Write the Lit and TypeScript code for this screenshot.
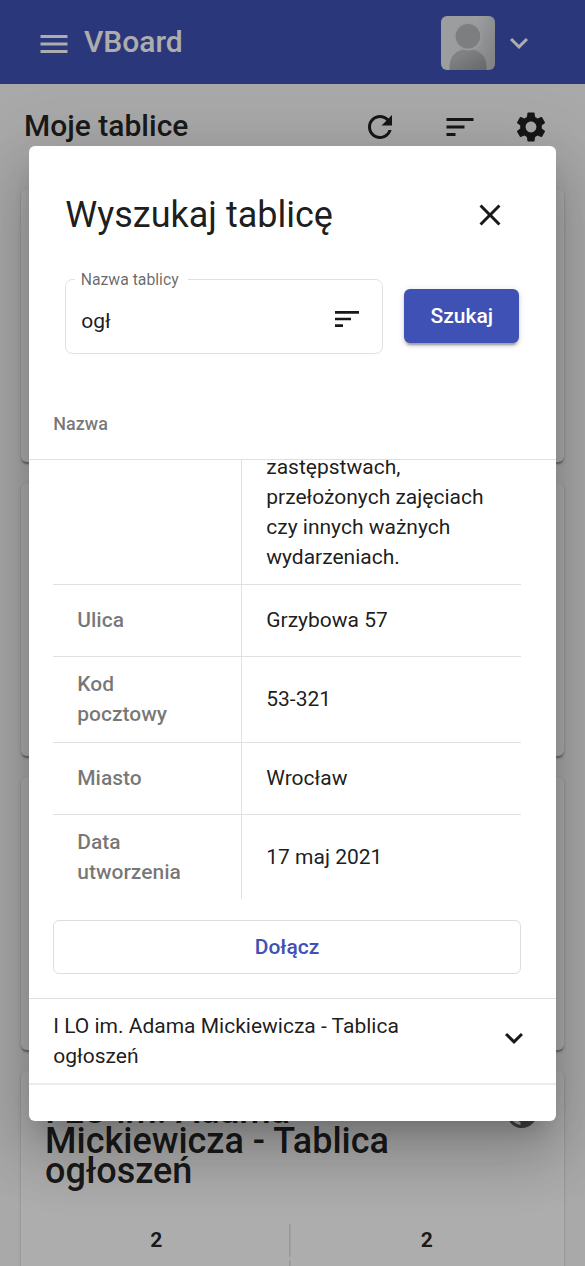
import { LitElement, html, css, svg } from "lit";
import { customElement, property } from "lit/decorators.js";

const ICONS: Record<string, string> = {
  menu: "M3 18h18v-2H3v2zm0-5h18v-2H3v2zm0-7v2h18V6H3z",
  refresh:
    "M17.65 6.35C16.2 4.9 14.21 4 12 4c-4.42 0-7.99 3.58-7.99 8s3.57 8 7.99 8c3.73 0 6.84-2.55 7.73-6h-2.08c-.82 2.33-3.04 4-5.65 4-3.31 0-6-2.69-6-6s2.69-6 6-6c1.66 0 3.14.69 4.22 1.78L13 11h7V4l-2.35 2.35z",
  sort: "M3 18h6v-2H3v2zM3 6v2h18V6H3zm0 7h12v-2H3v2z",
  settings:
    "M19.14 12.94c.04-.3.06-.61.06-.94 0-.32-.02-.64-.07-.94l2.03-1.58c.18-.14.23-.41.12-.61l-1.92-3.32c-.12-.22-.37-.29-.59-.22l-2.39.96c-.5-.38-1.03-.7-1.62-.94l-.36-2.54c-.04-.24-.24-.41-.48-.41h-3.84c-.24 0-.43.17-.47.41l-.36 2.54c-.59.24-1.13.57-1.62.94l-2.39-.96c-.22-.08-.47 0-.59.22L2.74 8.87c-.12.21-.08.47.12.61l2.03 1.58c-.05.3-.09.63-.09.94s.02.64.07.94l-2.03 1.58c-.18.14-.23.41-.12.61l1.92 3.32c.12.22.37.29.59.22l2.39-.96c.5.38 1.03.7 1.62.94l.36 2.54c.05.24.24.41.48.41h3.84c.24 0 .44-.17.47-.41l.36-2.54c.59-.24 1.13-.56 1.62-.94l2.39.96c.22.08.47 0 .59-.22l1.92-3.32c.12-.22.07-.47-.12-.61l-2.01-1.58zM12 15.6c-1.98 0-3.6-1.62-3.6-3.6s1.62-3.6 3.6-3.6 3.6 1.62 3.6 3.6-1.62 3.6-3.6 3.6z",
  close:
    "M19 6.41 17.59 5 12 10.59 6.41 5 5 6.41 10.59 12 5 17.59 6.41 19 12 13.41 17.59 19 19 17.59 13.41 12z",
  expand: "M16.59 8.59 12 13.17 7.41 8.59 6 10l6 6 6-6z",
  public:
    "M12 2C6.48 2 2 6.48 2 12s4.48 10 10 10 10-4.48 10-10S17.52 2 12 2zm-1 17.93c-3.95-.49-7-3.85-7-7.93 0-.62.08-1.21.21-1.79L9 15v1c0 1.1.9 2 2 2v1.93zm6.9-2.54c-.26-.81-1-1.39-1.9-1.39h-1v-3c0-.55-.45-1-1-1H8v-2h2c.55 0 1-.45 1-1V7h2c1.1 0 2-.9 2-2v-.41c2.93 1.19 5 4.06 5 7.41 0 2.08-.8 3.97-2.1 5.39z",
};

@customElement("mat-glyph")
class MatGlyph extends LitElement {
  @property() name = "menu";
  static styles = css`
    :host { display: block; width: 36px; height: 36px; flex: none; }
    svg { display: block; width: 100%; height: 100%; }
  `;
  render() {
    return html`<svg viewBox="0 0 24 24" fill="currentColor">${svg`<path d=${ICONS[this.name]}></path>`}</svg>`;
  }
}

@customElement("board-page")
class BoardPage extends LitElement {
  static styles = css`
    :host { display: block; height: 1266px; overflow: hidden; background: #fafafa; color: rgba(0,0,0,.87); }
    .bar { height: 84px; background: #3f51b5; color: #fff; display: flex; align-items: center; padding: 2px 48px 0 36px; box-sizing: border-box; }
    .menu { margin-top: 1px; }
    .brand { font-size: 30px; font-weight: 500; line-height: 36px; margin: -2px 0 0 12px; }
    .avatar { width: 54px; height: 54px; border-radius: 6px; overflow: hidden; margin: 0 6px 0 auto; }
    .avatar svg { display: block; }
    .head { height: 86px; display: flex; align-items: center; padding: 0 36px 0 24px; }
    .head h1 { font-size: 30px; line-height: 36px; font-weight: 500; margin: -2px auto 0 0; }
    .tools { display: flex; gap: 45px; }
    .tools :nth-child(2) { margin: 0 .5px 0 -.5px; }
    .tools :last-child { margin-left: -10.5px; }
    .list { display: flex; flex-direction: column; gap: 21px; padding: 19px 21px 0; }
    .card { height: 273px; flex: none; background: #fff; border-radius: 6px; box-sizing: border-box;
      box-shadow: 0 3px 1.5px -1.5px rgba(0,0,0,.2), 0 1.5px 1.5px rgba(0,0,0,.14), 0 1.5px 4.5px rgba(0,0,0,.12); }
    .title { display: flex; justify-content: space-between; padding: 24px 24px 0; }
    .title h2 { width: 360px; margin: 1px 0 0; font-size: 36px; line-height: 30px; font-weight: 500; }
    .globe { color: rgba(0,0,0,.6); }
    .counts { display: flex; font-size: 21px; font-weight: 700; line-height: 33px; margin-top: 38px; text-align: center; }
    .counts div { flex: 1; }
    .counts div:first-child { background: linear-gradient(#e0e0e0, #e0e0e0) right 1.5px top / 1.5px 100% no-repeat; }
    .counts div:last-child { padding-right: 2px; }
    .rule { height: 36px; margin-top: 3px; width: 270.5px; background: linear-gradient(#e0e0e0, #e0e0e0) right 1.5px top / 1.5px 100% no-repeat; }
  `;
  render() {
    return html`
      <header class="bar">
        <mat-glyph class="menu" name="menu"></mat-glyph>
        <div class="brand">VBoard</div>
        <div class="avatar">
          <svg width="54" height="54" viewBox="0 0 54 54">
            <defs>
              <linearGradient id="bg" x1="0" y1="0.3" x2="1" y2="0.7"><stop offset="0.5" stop-color="#e5e8ea"/><stop offset="1" stop-color="#c0c3c5"/></linearGradient>
              <linearGradient id="fg" x1="0" y1="0" x2="1" y2="1"><stop offset="0.3" stop-color="#bcbec0"/><stop offset="1" stop-color="#96989a"/></linearGradient>
            </defs>
            <rect width="54" height="54" fill="url(#bg)"/>
            <path d="M8.500 54v-4C8.500 39 17 33 27 33s18.500 6 18.500 17v4z" fill="url(#fg)"/>
            <circle cx="27" cy="20.200" r="14.200" fill="#e0e3e5"/>
            <circle cx="27" cy="20.200" r="12.300" fill="#b8babd"/>
          </svg>
        </div>
        <mat-glyph name="expand"></mat-glyph>
      </header>
      <div class="head">
        <h1>Moje tablice</h1>
        <div class="tools">
          <mat-glyph name="refresh"></mat-glyph>
          <mat-glyph name="sort"></mat-glyph>
          <mat-glyph name="settings"></mat-glyph>
        </div>
      </div>
      <div class="list">
        <div class="card"></div>
        <div class="card"></div>
        <div class="card"></div>
        <div class="card">
          <div class="title"><h2>I LO im. Adama Mickiewicza - Tablica ogłoszeń</h2><mat-glyph class="globe" name="public"></mat-glyph></div>
          <div class="counts"><div>2</div><div>2</div></div>
          <div class="rule"></div>
        </div>
      </div>
    `;
  }
}

@customElement("search-dialog")
class SearchDialog extends LitElement {
  static styles = css`
    :host { display: flex; flex-direction: column; width: 526.5px; height: 975px; box-sizing: border-box; background: #fff; border-radius: 6px; overflow: hidden; color: rgba(0,0,0,.9);
      box-shadow: 0 16.5px 22.5px -10.5px rgba(0,0,0,.2), 0 36px 57px 4.5px rgba(0,0,0,.14), 0 13.5px 69px 12px rgba(0,0,0,.12); }
    .top { display: flex; justify-content: space-between; align-items: center; padding: 48px 48px 0 36px; height: 42px; }
    .top h2 { margin: 0; font-size: 36px; line-height: 42px; font-weight: 400; }
    .form { display: flex; padding: 33.5px 36px 0; height: 85.5px; }
    fieldset { width: 318px; height: 85px; box-sizing: border-box; margin: 0; border: 1.5px solid #e0e0e0; border-radius: 7.5px; padding: 0 19px 0 15px; }
    legend { font-size: 15.75px; line-height: 18px; padding: 2px 9px 0 5.5px; margin-left: -6px; margin-top: -.5px; color: rgba(0,0,0,.6); }
    .input { display: flex; justify-content: space-between; align-items: center; font-size: 21px; line-height: 24px; margin-top: 18.5px; }
    .input mat-glyph { width: 32px; height: 32px; margin-top: -5px; }
    .go { width: 115px; height: 54px; margin: 19.5px .5px 0 auto; border: 0; border-radius: 6px; background: #3f51b5; color: #fff; font: 500 21px/54px Roboto, sans-serif; padding: 0; text-align: center;
      box-shadow: 0 4.5px 1.5px -3px rgba(0,0,0,.2), 0 3px 3px rgba(0,0,0,.14), 0 1.5px 7.5px rgba(0,0,0,.12); }
    .column { margin-top: 21px; height: 84px; box-sizing: border-box; padding: 36.5px 24px 0; font-size: 18px; line-height: 24px; font-weight: 500; color: rgba(0,0,0,.54); border-bottom: 1.5px solid #e0e0e0; }
    .scroll { flex: 1; min-height: 0; overflow: hidden; }
    .details { margin: -8px 35px 0 24px; }
    .row { display: grid; grid-template-columns: 189px 1fr; border-bottom: 1.5px solid #e0e0e0; font-size: 21px; line-height: 30px; }
    .row:last-child { border: 0; }
    .label { padding: 20.5px 24px; font-weight: 500; color: rgba(0,0,0,.54); border-right: 1.5px solid #e0e0e0; }
    .label.tall { padding: 12.5px 24px; }
    .row:last-child .label.tall { padding-bottom: 11.5px; }
    .value { padding: 0 24px; display: flex; align-items: center; }
    .value.first { padding: 0 24px 12px; }
    .join { margin: 21px 35px 0 24px; height: 54px; border: 1.5px solid #dedede; border-radius: 6px; box-sizing: border-box; text-align: center; color: #3f51b5; font-size: 21px; line-height: 52px; font-weight: 500; }
    .next { margin-top: 24px; height: 87px; box-sizing: border-box; border: solid #e0e0e0; border-width: 1px 0 2px; border-bottom-color: #ebebeb; display: flex; align-items: center; justify-content: space-between; padding: 0 24px; font-size: 21px; line-height: 30px; }
    .next span { width: 370px; }
    .next mat-glyph { margin-top: -6px; }
  `;
  render() {
    return html`
      <div class="top"><h2>Wyszukaj tablicę</h2><mat-glyph name="close"></mat-glyph></div>
      <div class="form">
        <fieldset><legend>Nazwa tablicy</legend><div class="input">ogł<mat-glyph name="sort"></mat-glyph></div></fieldset>
        <button class="go">Szukaj</button>
      </div>
      <div class="column">Nazwa</div>
      <div class="scroll">
        <div class="details">
          <div class="row"><div class="label"></div><div class="value first">zastępstwach, przełożonych zajęciach czy innych ważnych wydarzeniach.</div></div>
          <div class="row"><div class="label">Ulica</div><div class="value">Grzybowa 57</div></div>
          <div class="row"><div class="label tall">Kod<br>pocztowy</div><div class="value">53-321</div></div>
          <div class="row"><div class="label">Miasto</div><div class="value">Wrocław</div></div>
          <div class="row"><div class="label tall">Data<br>utworzenia</div><div class="value">17 maj 2021</div></div>
        </div>
        <div class="join">Dołącz</div>
        <div class="next"><span>I LO im. Adama Mickiewicza - Tablica ogłoszeń</span><mat-glyph name="expand"></mat-glyph></div>
      </div>
    `;
  }
}

@customElement("app-root")
class AppRoot extends LitElement {
  static styles = css`
    :host { display: block; position: relative; height: 1266px; overflow: hidden; font-family: Roboto, sans-serif; }
    .backdrop { position: absolute; inset: 0; background: rgba(0,0,0,.32); display: flex; justify-content: center; align-items: center; }
  `;
  render() {
    return html`<board-page></board-page><div class="backdrop"><search-dialog></search-dialog></div>`;
  }
}
